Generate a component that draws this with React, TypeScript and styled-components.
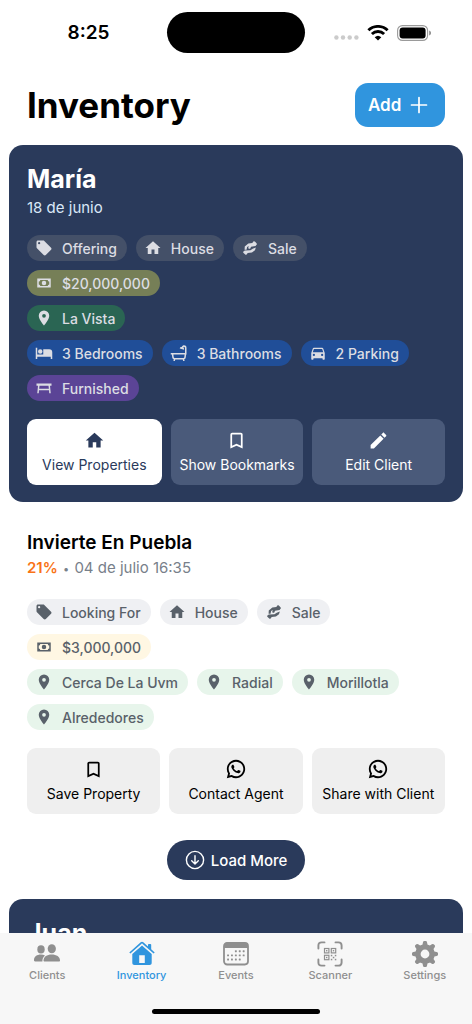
import React from "react";
import styled, { createGlobalStyle, css } from "styled-components";
import { RiWhatsappLine } from "react-icons/ri";

const NAVY = "#2a3a5b";
const BLUE = "#3095de";

const GlobalStyle = createGlobalStyle`
  *, *::before, *::after { box-sizing: border-box; }
  body {
    margin: 0;
    background: #ffffff;
    color: #000000;
    font-family: Inter, "Noto Sans", sans-serif;
    -webkit-font-smoothing: antialiased;
  }
  button { font: inherit; border: 0; padding: 0; cursor: pointer; }
  h1, h2, p, ul { margin: 0; padding: 0; }
`;

/* ---------- icons ---------- */

const paths = {
  tag: "M5.5,7A1.5,1.5 0 0,1 4,5.5A1.5,1.5 0 0,1 5.5,4A1.5,1.5 0 0,1 7,5.5A1.5,1.5 0 0,1 5.5,7M21.41,11.58L12.41,2.58C12.05,2.22 11.55,2 11,2H4C2.89,2 2,2.89 2,4V11C2,11.55 2.22,12.05 2.59,12.41L11.58,21.41C11.95,21.77 12.45,22 13,22C13.55,22 14.05,21.77 14.41,21.41L21.41,14.41C21.78,14.05 22,13.55 22,13C22,12.44 21.77,11.94 21.41,11.58Z",
  home: "M10,20V14H14V20H19V12H22L12,3L2,12H5V20H10Z",
  deal: "M17.2 2.6C18.6 3.4 20.4 5.2 21.4 6.8L19.4 9.4L13.4 10.4L12.4 12.6C11.4 13.6 9.6 13.2 9.7 11.6L10.2 9.2L8.2 10.6L7.4 14.2H4.8L5 10L9.8 6L15 5.2ZM6.8 21.4C5.4 20.6 3.6 18.8 2.6 17.2L5 15.4L12.6 15L15.6 13L19.8 11.4L18.6 15L14.6 18L9 18.8Z",
  cash: "M3,6H21V18H3V6M12,9A3,3 0 0,1 15,12A3,3 0 0,1 12,15A3,3 0 0,1 9,12A3,3 0 0,1 12,9M7,8A2,2 0 0,1 5,10V14A2,2 0 0,1 7,16H17A2,2 0 0,1 19,14V10A2,2 0 0,1 17,8H7Z",
  pin: "M12,11.5A2.5,2.5 0 0,1 9.5,9A2.5,2.5 0 0,1 12,6.5A2.5,2.5 0 0,1 14.5,9A2.5,2.5 0 0,1 12,11.5M12,2A7,7 0 0,0 5,9C5,14.25 12,22 12,22C12,22 19,14.25 19,9A7,7 0 0,0 12,2Z",
  bed: "M19,7H11V14H3V5H1V20H3V17H21V20H23V11A4,4 0 0,0 19,7M7,13A3,3 0 0,0 10,10A3,3 0 0,0 7,7A3,3 0 0,0 4,10A3,3 0 0,0 7,13Z",
  bath: "M1 12H20V5C20 3.6 18 3.5 17.6 4.8C18.7 5.4 19 6.3 18.7 7.5L13 6C13.4 4.5 14.3 4 15.6 4.1C16.8 0.7 22 1.2 22 5V14H21.6L21 18C20.8 19.3 20 20 19 20.3L19.5 22.5H17.5L17 20.5H7L6.5 22.5H4.5L5 20.3C4 20 3.3 19.3 3 18L2.4 14H1ZM4.5 14L5 17.5C5.1 18.2 5.5 18.5 6 18.5H18C18.5 18.5 18.9 18.2 19 17.5L19.5 14Z",
  car: "M5,11L6.5,6.5H17.5L19,11M17.5,16A1.5,1.5 0 0,1 16,14.5A1.5,1.5 0 0,1 17.5,13A1.5,1.5 0 0,1 19,14.5A1.5,1.5 0 0,1 17.5,16M6.5,16A1.5,1.5 0 0,1 5,14.5A1.5,1.5 0 0,1 6.5,13A1.5,1.5 0 0,1 8,14.5A1.5,1.5 0 0,1 6.5,16M18.92,6C18.72,5.42 18.16,5 17.5,5H6.5C5.84,5 5.28,5.42 5.08,6L3,12V20A1,1 0 0,0 4,21H5A1,1 0 0,0 6,20V19H18V20A1,1 0 0,0 19,21H20A1,1 0 0,0 21,20V12L18.92,6Z",
  table: "M2 6H22V9H20L21 19H19L18.7 15H5.3L5 19H3L4 9H2ZM6 9L5.5 13H18.5L18 9Z",
  bookmark: "M17,18L12,15.82L7,18V5H17M17,3H7A2,2 0 0,0 5,5V21L12,18L19,21V5C19,3.89 18.1,3 17,3Z",
  pencil: "M20.71,7.04C21.1,6.65 21.1,6 20.71,5.63L18.37,3.29C18,2.9 17.35,2.9 16.96,3.29L15.12,5.12L18.87,8.87M3,17.25V21H6.75L17.81,9.93L14.06,6.18L3,17.25Z",
};
type IconName = keyof typeof paths;

const Icon = ({ name, size }: { name: IconName; size: number }) => (
  <svg width={size} height={size} viewBox="0 0 24 24" fill="currentColor" fillRule="evenodd" aria-hidden="true">
    <path d={paths[name]} />
  </svg>
);

const PlusIcon = () => (
  <svg width="18" height="18" viewBox="0 0 18 18" stroke="currentColor" strokeWidth="1.7" strokeLinecap="round" aria-hidden="true">
    <path d="M9 1.5V16.5M1.5 9H16.5" />
  </svg>
);

const DownIcon = () => (
  <svg width="20" height="20" viewBox="0 0 20 20" fill="none" stroke="currentColor" strokeWidth="1.4" strokeLinecap="round" strokeLinejoin="round" aria-hidden="true">
    <circle cx="10" cy="10" r="8.6" />
    <path d="M10 5.8V13.8M6.7 10.8L10 14L13.3 10.8" />
  </svg>
);

const SignalIcon = () => (
  <svg width="25" height="5" viewBox="0 0 25 5" fill="#cbcbcb" aria-hidden="true">
    <circle cx="2.4" cy="2.5" r="2.2" />
    <circle cx="9" cy="2.5" r="2.2" />
    <circle cx="15.7" cy="2.5" r="2.2" />
    <circle cx="22.4" cy="2.5" r="2.2" />
  </svg>
);

const WifiIcon = () => (
  <svg width="22" height="16" viewBox="0 0 22 16" fill="none" stroke="#000" strokeWidth="2.9" aria-hidden="true">
    <path d="M1.4 5.3A13.8 13.8 0 0 1 20.6 5.3" />
    <path d="M4.9 9A8.8 8.8 0 0 1 17.1 9" />
    <path d="M11 15.6L7.7 12.2A4.8 4.8 0 0 1 14.3 12.2Z" fill="#000" stroke="none" />
  </svg>
);

const BatteryIcon = () => (
  <svg width="35" height="16" viewBox="0 0 35 16" aria-hidden="true">
    <rect x="0.6" y="0.6" width="30" height="14.8" rx="4.8" fill="none" stroke="#9a9a9a" strokeWidth="1.1" />
    <rect x="2.6" y="2.6" width="26" height="10.8" rx="3" fill="#000" />
    <path d="M32.2 5.5C34.6 6.3 34.6 9.7 32.2 10.5Z" fill="#8a8a8a" />
  </svg>
);

const ClientsIcon = () => (
  <svg width="26" height="26" viewBox="0 0 26 26" fill="currentColor" aria-hidden="true">
    <ellipse cx="7" cy="8.4" rx="3.7" ry="4.1" />
    <ellipse cx="17.8" cy="7.8" rx="4.1" ry="4.5" />
    <path d="M0 19.2C0 15.7 2.9 13.6 6.9 13.6C8.5 13.6 9.9 14 11 14.6C9.3 16 8.3 17.9 8.4 20.4H1.1C0.4 20.4 0 20 0 19.2Z" />
    <path d="M9.5 19.4C9.5 15.7 13 13.4 17.7 13.4C22.5 13.4 26 15.7 26 19.4C26 20.1 25.6 20.5 24.8 20.5H10.7C9.9 20.5 9.5 20.1 9.5 19.4Z" />
  </svg>
);

const InventoryIcon = () => (
  <svg width="26" height="26" viewBox="0 0 26 26" fill="currentColor" fillRule="evenodd" aria-hidden="true">
    <path d="M0.3 11.4L11.7 1.2C12.5 0.5 13.5 0.5 14.3 1.2L19 5.4V3.8C19 3.2 19.3 2.9 19.9 2.9H21.3C21.9 2.9 22.2 3.2 22.2 3.8V8.3L25.7 11.4L24.6 12.6L13.7 2.9C13.2 2.5 12.8 2.5 12.3 2.9L1.4 12.6Z" />
    <path d="M3.3 13L12.2 5.2C12.7 4.7 13.3 4.7 13.8 5.2L22.7 13V21.8C22.7 23.2 21.9 24 20.5 24H5.5C4.1 24 3.3 23.2 3.3 21.8ZM10.2 14.3V22H15.8V14.3Z" />
  </svg>
);

const EventsIcon = () => (
  <svg width="26" height="26" viewBox="0 0 26 26" fill="currentColor" aria-hidden="true">
    <rect x="1" y="2" width="24" height="21.5" rx="3.2" fill="none" stroke="currentColor" strokeWidth="1.8" />
    <path d="M1 7V5C1 2.8 2.2 1.6 4.4 1.6H21.6C23.8 1.6 25 2.8 25 5V7Z" />
    {[9.3, 13.4, 17.5].map((y, row) =>
      [5, 8.9, 12.8, 16.7, 20.6].map((x, col) =>
        (row === 0 && col < 2) || (row === 2 && col > 3) ? null : (
          <rect key={`${row}-${col}`} x={x - 0.9} y={y} width="1.9" height="1.9" rx="0.4" />
        )
      )
    )}
  </svg>
);

const ScannerIcon = () => (
  <svg width="26" height="26" viewBox="0 0 26 26" fill="none" stroke="currentColor" aria-hidden="true">
    <path
      strokeWidth="1.9"
      strokeLinecap="round"
      d="M1.4 7.5V4.6C1.4 2.4 2.4 1.4 4.6 1.4H7.5M18.5 1.4H21.4C23.6 1.4 24.6 2.4 24.6 4.6V7.5M24.6 18.5V21.4C24.6 23.6 23.6 24.6 21.4 24.6H18.5M7.5 24.6H4.6C2.4 24.6 1.4 23.6 1.4 21.4V18.5"
    />
    <g strokeWidth="1.2">
      <rect x="7.5" y="7.5" width="4.4" height="4.4" />
      <rect x="14.3" y="7.5" width="4.4" height="4.4" />
      <rect x="7.5" y="14.3" width="4.4" height="4.4" />
    </g>
    <g fill="currentColor" stroke="none">
      <rect x="9" y="9" width="1.4" height="1.4" />
      <rect x="15.8" y="9" width="1.4" height="1.4" />
      <rect x="9" y="15.8" width="1.4" height="1.4" />
      <rect x="13.8" y="13.8" width="1.5" height="1.5" />
      <rect x="17.8" y="13.8" width="1.5" height="1.5" />
      <rect x="15.8" y="15.8" width="1.5" height="1.5" />
      <rect x="13.8" y="17.8" width="1.5" height="1.5" />
      <rect x="17.8" y="17.8" width="1.5" height="1.5" />
    </g>
  </svg>
);

const SettingsIcon = () => (
  <svg width="26" height="26" viewBox="0 0 26 26" fill="none" stroke="currentColor" aria-hidden="true">
    <circle cx="13" cy="13" r="7.1" strokeWidth="5.4" />
    {[0, 45, 90, 135, 180, 225, 270, 315].map((a) => (
      <path key={a} d="M10.2 5L11 1.3Q11.2 0 12.2 0H13.8Q14.8 0 15 1.3L15.8 5Z" fill="currentColor" stroke="none" transform={`rotate(${a} 13 13)`} />
    ))}
  </svg>
);

/* ---------- layout ---------- */

const Screen = styled.div`
  display: flex;
  flex-direction: column;
  height: 100vh;
`;

const StatusBar = styled.div`
  flex: none;
  display: grid;
  grid-template-columns: 1fr 138px 1fr;
  align-items: center;
  padding-top: 12px;
`;

const Clock = styled.time`
  padding-left: 10px;
  text-align: center;
  font-size: 19px;
  line-height: 24px;
  font-weight: 600;
`;

const Island = styled.div`
  height: 41px;
  border-radius: 21px;
  background: #000000;
`;

const StatusIcons = styled.div`
  display: flex;
  align-items: center;
  justify-content: flex-end;
  gap: 8px;
  padding-right: 40px;

  svg:first-child { margin-top: 10px; }
`;

const Header = styled.header`
  flex: none;
  display: flex;
  align-items: center;
  justify-content: space-between;
  padding: 30px 27px 18px;
`;

const Title = styled.h1`
  font-size: 35px;
  line-height: 44px;
  font-weight: 700;
`;

const AddButton = styled.button`
  display: flex;
  align-items: center;
  justify-content: space-between;
  width: 90px;
  height: 44px;
  padding: 0 17px 0 13px;
  border-radius: 13px;
  background: ${BLUE};
  color: #ffffff;
  font-size: 17px;
  font-weight: 600;
`;

const Feed = styled.main`
  flex: 1;
  min-height: 0;
  overflow-y: auto;
  scrollbar-width: none;
  padding: 0 9px;
`;

const Card = styled.article<{ $dark?: boolean }>`
  padding: ${(p) => (p.$dark ? "18px 18px 17px" : "26px 18px")};
  border-radius: 14px;
  background: ${(p) => (p.$dark ? NAVY : "transparent")};
  color: ${(p) => (p.$dark ? "#ffffff" : "#000000")};
`;

const Name = styled.h2<{ $large?: boolean }>`
  font-size: ${(p) => (p.$large ? 25 : 19)}px;
  line-height: ${(p) => (p.$large ? 32 : 30)}px;
  font-weight: ${(p) => (p.$large ? 700 : 600)};
`;

const Meta = styled.p<{ $dark?: boolean }>`
  margin-bottom: ${(p) => (p.$dark ? 14 : 20)}px;
  font-size: 15px;
  line-height: ${(p) => (p.$dark ? 26 : 20)}px;
  color: ${(p) => (p.$dark ? "#d9e8f8" : "#78808a")};
`;

const Score = styled.strong`
  font-weight: 600;
  color: #f97316;
`;

const Dot = styled.span`
  margin: 0 1px;
  font-size: 11px;
`;

const ChipRows = styled.div`
  display: grid;
  gap: 9px;
`;

const ChipRow = styled.ul`
  display: flex;
  flex-wrap: wrap;
  gap: 9px;
  list-style: none;
`;

const tones = {
  plain: ["#445068", "#eff0f3"],
  price: ["#767f57", "#fff7e3"],
  place: ["#2a6553", "#e7f5eb"],
  room: ["#204e98", "#e3edfb"],
  extra: ["#5b4496", "#efe7fb"],
};
type Tone = keyof typeof tones;

const ChipItem = styled.li<{ $tone: Tone; $dark?: boolean }>`
  display: flex;
  align-items: center;
  gap: 9px;
  height: 26px;
  padding: 0 10px 0 8px;
  border-radius: 13px;
  background: ${(p) => tones[p.$tone][p.$dark ? 0 : 1]};
  color: ${(p) => (p.$dark ? "#dcdde3" : "#59616a")};
  font-size: 14px;
  font-weight: 500;
  white-space: nowrap;
`;

const Actions = styled.div<{ $leadWider?: boolean }>`
  display: grid;
  grid-template-columns: ${(p) => (p.$leadWider ? "135fr 133fr 133fr" : "repeat(3, 1fr)")};
  gap: 9px;
  margin-top: 18px;
`;

const fills = {
  white: css`background: #ffffff; color: ${NAVY};`,
  slate: css`background: #4a5a7a; color: #ffffff;`,
  grey: css`background: #efefef; color: #000000;`,
};

const ActionButton = styled.button<{ $fill: keyof typeof fills }>`
  display: flex;
  flex-direction: column;
  align-items: center;
  justify-content: center;
  gap: 4px;
  height: 66px;
  border-radius: 9px;
  font-size: 14px;
  line-height: 20px;
  white-space: nowrap;
  ${(p) => fills[p.$fill]}
`;

const LoadMore = styled.button`
  display: flex;
  align-items: center;
  justify-content: center;
  gap: 6px;
  width: 138px;
  height: 40px;
  margin: 0 auto 19px;
  border-radius: 20px;
  background: ${NAVY};
  color: #ffffff;
  font-size: 15px;
  font-weight: 500;
`;

const TabBar = styled.nav`
  flex: none;
  background: #f7f7f7;
  padding: 8px 0 10px;
`;

const Tabs = styled.div`
  display: grid;
  grid-template-columns: repeat(5, 1fr);
`;

const Tab = styled.a<{ $active?: boolean }>`
  display: flex;
  flex-direction: column;
  align-items: center;
  gap: 1px;
  color: ${(p) => (p.$active ? BLUE : "#8f8f8f")};
  font-size: 11px;
  line-height: 14px;
  font-weight: 500;
  text-decoration: none;
`;

const HomeIndicator = styled.div`
  width: 168px;
  height: 5px;
  margin: 27px auto 0;
  border-radius: 3px;
  background: #000000;
`;

/* ---------- content ---------- */

type ChipData = [IconName, string, Tone];

const clientChips: ChipData[][] = [
  [["tag", "Offering", "plain"], ["home", "House", "plain"], ["deal", "Sale", "plain"]],
  [["cash", "$20,000,000", "price"]],
  [["pin", "La Vista", "place"]],
  [["bed", "3 Bedrooms", "room"], ["bath", "3 Bathrooms", "room"], ["car", "2 Parking", "room"]],
  [["table", "Furnished", "extra"]],
];

const agentChips: ChipData[][] = [
  [["tag", "Looking For", "plain"], ["home", "House", "plain"], ["deal", "Sale", "plain"]],
  [["cash", "$3,000,000", "price"]],
  [["pin", "Cerca De La Uvm", "place"], ["pin", "Radial", "place"], ["pin", "Morillotla", "place"], ["pin", "Alrededores", "place"]],
];

const Chips = ({ rows, dark }: { rows: ChipData[][]; dark?: boolean }) => (
  <ChipRows>
    {rows.map((row) => (
      <ChipRow key={row[0][1]}>
        {row.map(([icon, label, tone]) => (
          <ChipItem key={label} $tone={tone} $dark={dark}>
            <Icon name={icon} size={18} />
            {label}
          </ChipItem>
        ))}
      </ChipRow>
    ))}
  </ChipRows>
);

const tabs = [
  { label: "Clients", icon: <ClientsIcon /> },
  { label: "Inventory", icon: <InventoryIcon />, active: true },
  { label: "Events", icon: <EventsIcon /> },
  { label: "Scanner", icon: <ScannerIcon /> },
  { label: "Settings", icon: <SettingsIcon /> },
];

export default function App() {
  return (
    <Screen>
      <GlobalStyle />
      <StatusBar>
        <Clock>8:25</Clock>
        <Island />
        <StatusIcons>
          <SignalIcon />
          <WifiIcon />
          <BatteryIcon />
        </StatusIcons>
      </StatusBar>

      <Header>
        <Title>Inventory</Title>
        <AddButton type="button">
          Add
          <PlusIcon />
        </AddButton>
      </Header>

      <Feed>
        <Card $dark>
          <Name $large>María</Name>
          <Meta $dark>18 de junio</Meta>
          <Chips rows={clientChips} dark />
          <Actions $leadWider>
            <ActionButton type="button" $fill="white">
              <Icon name="home" size={21} />
              View Properties
            </ActionButton>
            <ActionButton type="button" $fill="slate">
              <Icon name="bookmark" size={21} />
              Show Bookmarks
            </ActionButton>
            <ActionButton type="button" $fill="slate">
              <Icon name="pencil" size={21} />
              Edit Client
            </ActionButton>
          </Actions>
        </Card>

        <Card>
          <Name>Invierte En Puebla</Name>
          <Meta>
            <Score>21%</Score> <Dot>•</Dot> 04 de julio 16:35
          </Meta>
          <Chips rows={agentChips} />
          <Actions>
            <ActionButton type="button" $fill="grey">
              <Icon name="bookmark" size={21} />
              Save Property
            </ActionButton>
            <ActionButton type="button" $fill="grey">
              <RiWhatsappLine size={22} />
              Contact Agent
            </ActionButton>
            <ActionButton type="button" $fill="grey">
              <RiWhatsappLine size={22} />
              Share with Client
            </ActionButton>
          </Actions>
        </Card>

        <LoadMore type="button">
          <DownIcon />
          Load More
        </LoadMore>

        <Card $dark>
          <Name $large>Juan</Name>
        </Card>
      </Feed>

      <TabBar>
        <Tabs>
          {tabs.map((t) => (
            <Tab key={t.label} href="#" $active={t.active} aria-current={t.active ? "page" : undefined}>
              {t.icon}
              {t.label}
            </Tab>
          ))}
        </Tabs>
        <HomeIndicator />
      </TabBar>
    </Screen>
  );
}
